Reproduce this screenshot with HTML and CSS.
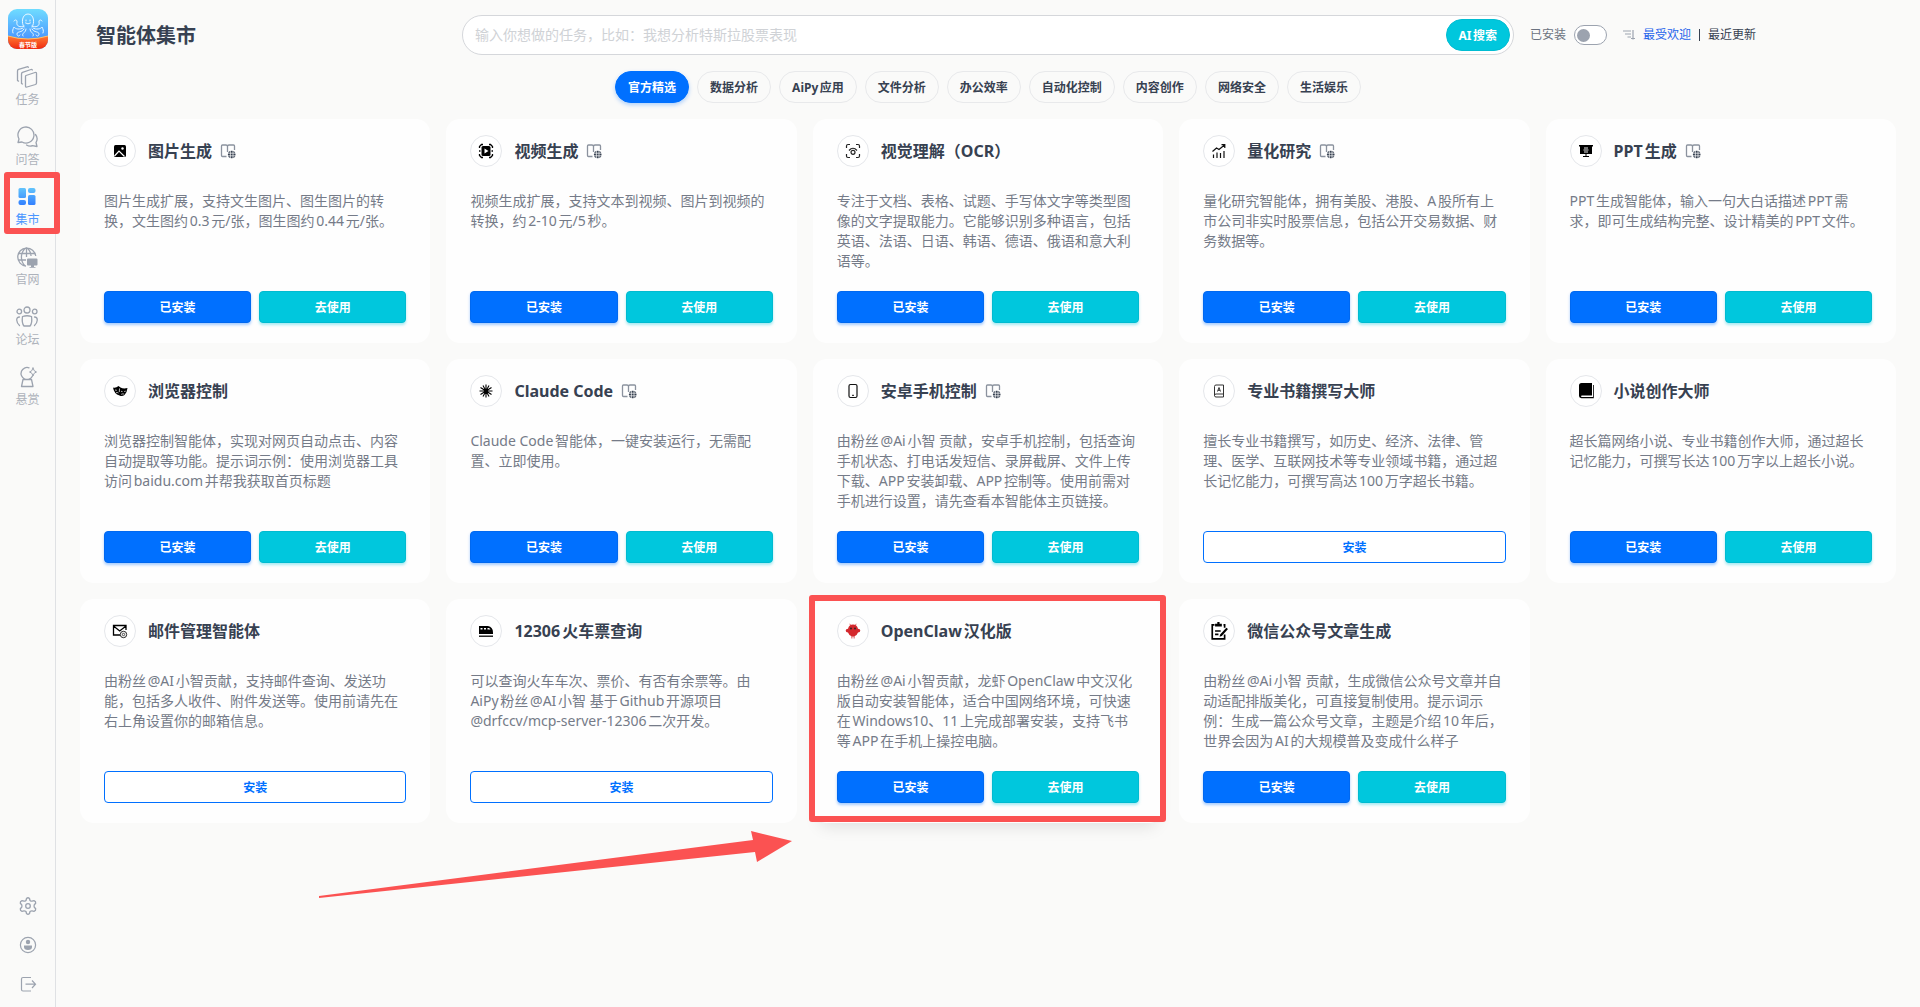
FILE: index.html
```html
<!DOCTYPE html>
<html lang="zh-CN">
<head>
<meta charset="utf-8">
<meta name="viewport" content="width=device-width, initial-scale=1">
<title>智能体集市</title>
<link rel="stylesheet" href="styles.css">
</head>
<body>
<svg class="sprite" aria-hidden="true">
  <symbol id="book" viewBox="0 0 16 16">
    <path d="M6.500 13.500H2.500Q1.500 13.500 1.500 12.500V3Q1.500 2 2.500 2H6Q7.500 2 7.500 3.500V9M7.500 3.500Q7.500 2 9 2H13.500Q14.500 2 14.500 3V7" fill="none" stroke="#8b929e" stroke-width="1.300"/>
    <circle cx="11.700" cy="11.500" r="3.800" fill="#374151"/>
    <path d="M7.500 10.200h8.500M7.500 12.800h8.500M10.400 7.500v8M13 7.500v8" stroke="#fff" stroke-width=".7"/>
  </symbol>
</svg>
<div class="app">
  <aside class="sidebar">
    <svg class="logo" viewBox="0 0 40 40" role="img" aria-label="AiPy">
      <defs>
        <linearGradient id="sky" x1="0" y1="0" x2="0" y2="1"><stop offset="0" stop-color="#6fdcff"/><stop offset=".75" stop-color="#4a97ff"/></linearGradient>
        <linearGradient id="fire" x1="0" y1="0" x2="0" y2="1"><stop offset="0" stop-color="#ff7a35"/><stop offset="1" stop-color="#f02a10"/></linearGradient>
        <clipPath id="round"><rect width="40" height="40" rx="9"/></clipPath>
      </defs>
      <g clip-path="url(#round)">
        <rect width="40" height="40" fill="url(#sky)"/>
        <g fill="none" stroke="#e9f8ff" stroke-width="1" stroke-linecap="round">
          <path d="M16 18C13 14 14 5 20 5s7 9 4 13"/>
          <path d="M16 17c-4 2-8 0-7-4 .5-2-2-3-3-1M24 17c4 2 8 0 7-4-.5-2 2-3 3-1"/>
          <path d="M15 19c-3 2-8 1-9-1-1 2-2 4-1 6M25 19c3 2 8 1 9-1 1 2 2 4 1 6"/>
          <path d="M16 20c-2 4-7 2-7 5 0 2 2 3 3 1M24 20c2 4 7 2 7 5 0 2-2 3-3 1"/>
          <path d="M18 20c0 4-5 4-3 7M22 20c0 4 5 4 3 7M17.500 14q2.500 2 5 0"/>
          <path d="M18 11v1M22 11v1"/>
        </g>
        <path d="M0 27Q20 33 40 27V40H0Z" fill="url(#fire)"/>
        <path d="M0 27Q20 33 40 27" fill="none" stroke="#ffc36b" stroke-width="1"/>
        <text x="20" y="38" text-anchor="middle" class="logo-text">春节版</text>
      </g>
    </svg>
    <nav class="side-nav">
      <a href="#" class="side-link">
        <svg viewBox="0 0 22 22"><g fill="none" stroke="currentColor" stroke-width="1.300" stroke-linejoin="round" stroke-linecap="round"><path d="M10 9.500 19 6.500Q20.500 6 20.500 7.500V17Q20.500 18 19.500 18.500L11 21Q9.500 21.500 9.500 20V10.500Q9.500 9.700 10 9.500Z"/><path d="M5.500 17.500V8Q5.500 6.700 6.500 6.300L15 3.500Q16 3.200 16.300 4M5.500 17.500l1 .5"/><path d="M1.500 14.500V5Q1.500 3.700 2.500 3.300L11 .8Q12 .5 12.300 1.300M1.500 14.500l1 .6"/></g></svg>
        <span>任务</span>
      </a>
      <a href="#" class="side-link">
        <svg viewBox="0 0 22 22"><g fill="none" stroke="currentColor" stroke-width="1.300" stroke-linejoin="round" stroke-linecap="round"><path d="M2 16.500 3 13A8 8 0 1 1 6 16Z"/><path d="M19.500 8.500A7 7 0 0 1 20 16.500L21 20.500 16.500 19.600Q13.500 20.800 10.500 19"/></g></svg>
        <span>问答</span>
      </a>
      <a href="#" class="side-link is-active" aria-current="page">
        <svg viewBox="0 0 22 22"><defs><linearGradient id="tile" gradientUnits="userSpaceOnUse" x1="0" y1="2" x2="0" y2="20"><stop offset="0" stop-color="#62c4fb"/><stop offset="1" stop-color="#2f7bff"/></linearGradient></defs><g fill="url(#tile)"><rect x="2.500" y="2" width="7.500" height="10" rx="1.500"/><rect x="12" y="2" width="7.500" height="5" rx="2"/><rect x="2.500" y="14" width="7.500" height="5" rx="2"/><rect x="12" y="9" width="7.500" height="10" rx="1.500"/></g></svg>
        <span>集市</span>
      </a>
      <a href="#" class="side-link">
        <svg viewBox="0 0 22 22"><g fill="none" stroke="currentColor" stroke-width="1.300"><path d="M10 20A9 9 0 1 1 19.700 10M10.500 1.500C4 6 4 15 9 20M10.500 1.500Q15 5 15 10M2 7.500H19M2 14H10M10.500 1.500V11"/></g><path d="M12 12.500h8.500q1 0 1 1v5q0 1-1 1H18v1.500h1.500v.8h-6v-.8H15v-1.500h-3q-1 0-1-1v-5q0-1 1-1Z" fill="currentColor"/></svg>
        <span>官网</span>
      </a>
      <a href="#" class="side-link">
        <svg viewBox="0 0 22 22"><g fill="none" stroke="currentColor" stroke-width="1.300" stroke-linecap="round"><circle cx="11" cy="4" r="3"/><circle cx="3.300" cy="5.500" r="2.300"/><circle cx="18.700" cy="5.500" r="2.300"/><path d="M6.500 10.500Q11 9 15.500 10.500Q16.500 17 14 20H8Q5.500 17 6.500 10.500ZM3.500 11Q.7 11 .7 14Q1 17.500 3.500 19.500M18.500 11Q21.300 11 21.300 14Q21 17.500 18.500 19.500"/></g></svg>
        <span>论坛</span>
      </a>
      <a href="#" class="side-link">
        <svg viewBox="0 0 22 22"><g fill="none" stroke="currentColor" stroke-width="1.300" stroke-linejoin="round" stroke-linecap="round"><path d="M13 1.800A6 6 0 1 0 16.500 10M7 13.500H15.500L17 20.500H5.500Z"/><path d="M17 2Q17.500 5.500 20.500 6 17.500 6.500 17 10 16.500 6.500 13.500 6 16.500 5.500 17 2Z" stroke-width="1"/></g></svg>
        <span>悬赏</span>
      </a>
    </nav>
    <div class="side-tools">
      <button type="button" aria-label="设置"><svg viewBox="0 0 20 20"><g fill="none" stroke="currentColor" stroke-width="1.300" stroke-linejoin="round"><circle cx="10" cy="10" r="2.300"/><path d="M8.500 2.500Q10 1 11.500 2.500L12 4.500Q13 5.300 14 5.200L16 4.700Q18 5.500 17.700 7.200L16.300 8.800Q15.800 10 16.300 11.200L17.700 12.800Q18 14.500 16 15.300L14 14.800Q13 14.700 12 15.500L11.500 17.500Q10 19 8.500 17.500L8 15.500Q7 14.700 6 14.800L4 15.300Q2 14.500 2.300 12.800L3.700 11.200Q4.200 10 3.700 8.800L2.300 7.200Q2 5.500 4 4.700L6 5.200Q7 5.300 8 4.500Z"/></g></svg></button>
      <button type="button" aria-label="账户"><svg viewBox="0 0 20 20"><circle cx="10" cy="10" r="7.600" fill="none" stroke="currentColor" stroke-width="1.200"/><circle cx="10" cy="7" r="2.200" fill="currentColor"/><path d="M6 10.500h8v1.500q0 3-4 3t-4-3Z" fill="currentColor"/></svg></button>
      <button type="button" aria-label="退出"><svg viewBox="0 0 20 20"><path d="M13 3.500H5Q3.500 3.500 3.500 5V15.500Q3.500 17 5 17H13M7.500 10.200H17.500M14 6.500 17.500 10.200 14 14" fill="none" stroke="currentColor" stroke-width="1.200"/></svg></button>
    </div>
    <div class="side-mark"></div>
  </aside>

  <main class="main">
    <header class="top">
      <h1>智能体集市</h1>
      <form class="search">
        <input type="text" aria-label="任务" placeholder="输入你想做的任务，比如：我想分析特斯拉股票表现">
        <button type="button">AI搜索</button>
      </form>
      <div class="filters">
        <label class="switch">已安装<input type="checkbox" role="switch"></label>
        <div class="sort">
          <svg viewBox="0 0 12 12" aria-hidden="true"><path d="M0 2h8M2 5h6M4.500 8H8M10 1v9.500M8 9.500h4" fill="none" stroke="#9ca3af" stroke-width="1.200"/></svg>
          <a href="#" class="is-active">最受欢迎</a>
          <i></i>
          <a href="#">最近更新</a>
        </div>
      </div>
    </header>

    <div class="tabs">
      <button type="button" class="is-active">官方精选</button>
      <button type="button">数据分析</button>
      <button type="button">AiPy应用</button>
      <button type="button">文件分析</button>
      <button type="button">办公效率</button>
      <button type="button">自动化控制</button>
      <button type="button">内容创作</button>
      <button type="button">网络安全</button>
      <button type="button">生活娱乐</button>
    </div>

    <section class="grid">
      <article class="card">
        <div class="card-head">
          <span class="badge"><svg viewBox="0 0 16 16"><rect x="2" y="2" width="12" height="12" rx="1.500"/><path d="M2.500 13 7 8l5.500 5.500" fill="none" stroke="#fff" stroke-width="1.200"/><circle cx="10.500" cy="5.500" r="1.200" fill="#fff"/></svg></span>
          <h2>图片生成</h2><svg class="book"><use href="#book"/></svg>
        </div>
        <p>图片生成扩展，支持文生图片、图生图片的转换，文生图约0.3元/张，图生图约0.44元/张。</p>
        <div class="actions"><button type="button" class="btn blue">已安装</button><button type="button" class="btn cyan">去使用</button></div>
      </article>
      <article class="card">
        <div class="card-head">
          <span class="badge"><svg viewBox="0 0 16 16"><path d="M1.500 5V3.500L3.500 1.500H5M11 1.500h1.500l2 2V5M14.500 11v1.500l-2 2H11M5 14.500H3.500l-2-2V11M1 8h1.500M13.500 8H15" fill="none" stroke="#000" stroke-width="1.300"/><rect x="3.500" y="3" width="9" height="10" rx="1.500"/><path d="M6.500 5.500v5L10.500 8Z" fill="#fff"/></svg></span>
          <h2>视频生成</h2><svg class="book"><use href="#book"/></svg>
        </div>
        <p>视频生成扩展，支持文本到视频、图片到视频的转换，约2-10元/5秒。</p>
        <div class="actions"><button type="button" class="btn blue">已安装</button><button type="button" class="btn cyan">去使用</button></div>
      </article>
      <article class="card">
        <div class="card-head">
          <span class="badge"><svg viewBox="0 0 16 16"><g fill="none" stroke="#222" stroke-width="1.200"><path d="M1.500 5V3Q1.500 1.500 3 1.500H5M11 1.500h2q1.500 0 1.500 1.500V5M14.500 11v2q0 1.500-1.500 1.500H11M5 14.500H3Q1.500 14.500 1.500 13V11M4 7.500Q8 3 12 7.500"/><circle cx="8" cy="9.300" r="2"/></g></svg></span>
          <h2>视觉理解（OCR）</h2>
        </div>
        <p>专注于文档、表格、试题、手写体文字等类型图像的文字提取能力。它能够识别多种语言，包括英语、法语、日语、韩语、德语、俄语和意大利语等。</p>
        <div class="actions"><button type="button" class="btn blue">已安装</button><button type="button" class="btn cyan">去使用</button></div>
      </article>
      <article class="card">
        <div class="card-head">
          <span class="badge"><svg viewBox="0 0 16 16"><path d="M1.500 8.500 5.500 5 8 6.500 13.500 2M10.500 1.700h3.300V5M2.500 15v-3.500M6 15V9.500M9.500 15v-5M13 15V8" fill="none" stroke="#111" stroke-width="1.200"/></svg></span>
          <h2>量化研究</h2><svg class="book"><use href="#book"/></svg>
        </div>
        <p>量化研究智能体，拥有美股、港股、A股所有上市公司非实时股票信息，包括公开交易数据、财务数据等。</p>
        <div class="actions"><button type="button" class="btn blue">已安装</button><button type="button" class="btn cyan">去使用</button></div>
      </article>
      <article class="card">
        <div class="card-head">
          <span class="badge"><svg viewBox="0 0 16 16"><path d="M1 2h14v1.500h-1V11H2V3.500H1ZM7.500 11h1v2H11v1H5v-1h2.500Z"/><path d="M6 5h4M5.500 7h5M6 9h4" stroke="#fff" stroke-width=".9"/></svg></span>
          <h2>PPT生成</h2><svg class="book"><use href="#book"/></svg>
        </div>
        <p>PPT生成智能体，输入一句大白话描述PPT需求，即可生成结构完整、设计精美的PPT文件。</p>
        <div class="actions"><button type="button" class="btn blue">已安装</button><button type="button" class="btn cyan">去使用</button></div>
      </article>

      <article class="card">
        <div class="card-head">
          <span class="badge"><svg viewBox="0 0 16 16"><path d="M1 4.500Q4 5.200 6.500 3L8.500 4.500Q11.500 6 15.500 5 15 9.500 12.500 12 10 13.800 7.500 12.500 2 11 1 4.500Z"/><path d="M3 7l1.800.3M4 9.800q1.300-.8 2.500.2M9 8.300l1.500.3M12.200 8.500l1.500-.3M9.200 11.300q1.500-.8 3-.2M7.500 5.500 7.300 9" stroke="#fff" stroke-width=".7" fill="none"/></svg></span>
          <h2>浏览器控制</h2>
        </div>
        <p>浏览器控制智能体，实现对网页自动点击、内容自动提取等功能。提示词示例：使用浏览器工具访问baidu.com并帮我获取首页标题</p>
        <div class="actions"><button type="button" class="btn blue">已安装</button><button type="button" class="btn cyan">去使用</button></div>
      </article>
      <article class="card">
        <div class="card-head">
          <span class="badge"><svg viewBox="0 0 16 16"><path d="M8 8V1.500M8 8l3-5.500M8 8l5.500-3.500M8 8h6.500M8 8l5.500 3.500M8 8l3 5.500M8 8v6.500M8 8l-3 5.500M8 8l-5.500 3.500M8 8H1.500M8 8 2.500 4.500M8 8 5 2.500" stroke="#000" stroke-width="1.100"/></svg></span>
          <h2>Claude Code</h2><svg class="book"><use href="#book"/></svg>
        </div>
        <p>Claude Code智能体，一键安装运行，无需配置、立即使用。</p>
        <div class="actions"><button type="button" class="btn blue">已安装</button><button type="button" class="btn cyan">去使用</button></div>
      </article>
      <article class="card">
        <div class="card-head">
          <span class="badge"><svg viewBox="0 0 16 16"><rect x="4" y="1.500" width="8" height="13" rx="1.500" fill="none" stroke="#111" stroke-width="1.200"/><path d="M7 12.300h2" stroke="#111"/></svg></span>
          <h2>安卓手机控制</h2><svg class="book"><use href="#book"/></svg>
        </div>
        <p>由粉丝@Ai小智 贡献，安卓手机控制，包括查询手机状态、打电话发短信、录屏截屏、文件上传下载、APP安装卸载、APP控制等。使用前需对手机进行设置，请先查看本智能体主页链接。</p>
        <div class="actions"><button type="button" class="btn blue">已安装</button><button type="button" class="btn cyan">去使用</button></div>
      </article>
      <article class="card">
        <div class="card-head">
          <span class="badge"><svg viewBox="0 0 16 16"><path d="M12.500 11V2H5Q3.500 2 3.500 3.500V12.500Q3.500 14 5 14H12.500M3.500 12.500Q3.500 11 5 11H12.500V14M6.500 8.500 8 4.500l1.500 4M7 7.300h2" fill="none" stroke="#333"/></svg></span>
          <h2>专业书籍撰写大师</h2>
        </div>
        <p>擅长专业书籍撰写，如历史、经济、法律、管理、医学、互联网技术等专业领域书籍，通过超长记忆能力，可撰写高达100万字超长书籍。</p>
        <div class="actions"><button type="button" class="btn line">安装</button></div>
      </article>
      <article class="card">
        <div class="card-head">
          <span class="badge"><svg viewBox="0 0 16 16"><path d="M3.500 0H14v12.500H4q-1 0-1 .7t1 .8H15V2h.8v13.200H3.500Q1 15 1 13V2.500Q1 0 3.500 0Z"/></svg></span>
          <h2>小说创作大师</h2>
        </div>
        <p>超长篇网络小说、专业书籍创作大师，通过超长记忆能力，可撰写长达100万字以上超长小说。</p>
        <div class="actions"><button type="button" class="btn blue">已安装</button><button type="button" class="btn cyan">去使用</button></div>
      </article>

      <article class="card">
        <div class="card-head">
          <span class="badge"><svg viewBox="0 0 16 16"><path d="M8 12H1.500V2.500H14V7M1.500 3 7.700 8 14 3" fill="none" stroke="#000" stroke-width="1.300"/><circle cx="11.500" cy="11.500" r="3.200" fill="#fff" stroke="#222"/><circle cx="11.500" cy="11.500" r="1.200" fill="none" stroke="#222" stroke-width=".8"/></svg></span>
          <h2>邮件管理智能体</h2>
        </div>
        <p>由粉丝@AI小智贡献，支持邮件查询、发送功能，包括多人收件、附件发送等。使用前请先在右上角设置你的邮箱信息。</p>
        <div class="actions"><button type="button" class="btn line">安装</button></div>
      </article>
      <article class="card">
        <div class="card-head">
          <span class="badge"><svg viewBox="0 0 16 16"><path d="M1 3h9q5 1 5 6.500V11H1Z"/><path d="M2.500 5h2v1.500h-2zM6 5h2v1.500H6zM9.500 5h1.500q1 .5 1.500 1.500h-3z" fill="#fff"/><path d="M1 13.200h14" stroke="#000" stroke-width="1.300"/></svg></span>
          <h2>12306火车票查询</h2>
        </div>
        <p>可以查询火车车次、票价、有否有余票等。由AiPy粉丝@AI小智 基于Github开源项目@drfccv/mcp-server-12306二次开发。</p>
        <div class="actions"><button type="button" class="btn line">安装</button></div>
      </article>
      <article class="card is-raised">
        <div class="card-head">
          <span class="badge"><svg viewBox="0 0 16 16"><path d="M6 3 4.800 .8M10 3 11.200 .8" stroke="#e0474a" stroke-width=".8"/><path d="M8 1.500q3.800 0 5 4.200 2.300 0 2.300 1.700T13 9.500Q12 12.300 9.500 13.300V15.500H8.700V13.500H7.300V15.500H6.500V13.300Q4 12.300 3 9.500 .7 9.100 .7 7.400T3 5.700Q4.200 1.500 8 1.500Z" fill="#d4282d"/><circle cx="6" cy="5.500" r=".9" fill="#222"/><circle cx="10" cy="5.500" r=".9" fill="#222"/></svg></span>
          <h2>OpenClaw汉化版</h2>
        </div>
        <p>由粉丝@Ai小智贡献，龙虾OpenClaw中文汉化版自动安装智能体，适合中国网络环境，可快速在Windows10、11上完成部署安装，支持飞书等APP在手机上操控电脑。</p>
        <div class="actions"><button type="button" class="btn blue">已安装</button><button type="button" class="btn cyan">去使用</button></div>
        <div class="card-mark"></div>
        <svg class="arrow" viewBox="0 0 480 80" aria-hidden="true"><path d="M2 70 436 14 434 5 475 15 440 36 438 26 2 72Z" fill="#fb5252"/></svg>
      </article>
      <article class="card">
        <div class="card-head">
          <span class="badge"><svg class="tall" viewBox="0 0 16 16"><path d="M12 2.500H13V5M4 2.500H2V15H13V11M4.500 8h5M4.500 11h3" fill="none" stroke="#000" stroke-width="1.500"/><path d="M4.500 1.500H6.500V0h2v1.500h2V4h-6ZM14.500 5 16 6.300 10.500 12.500 8.500 13 9 11Z"/></svg></span>
          <h2>微信公众号文章生成</h2>
        </div>
        <p>由粉丝@Ai小智 贡献，生成微信公众号文章并自动适配排版美化，可直接复制使用。提示词示例：生成一篇公众号文章，主题是介绍10年后，世界会因为AI的大规模普及变成什么样子</p>
        <div class="actions"><button type="button" class="btn blue">已安装</button><button type="button" class="btn cyan">去使用</button></div>
      </article>
    </section>
  </main>
</div>
</body>
</html>
```
FILE: styles.css
```css
* { box-sizing: border-box; }

body {
  margin: 0;
  background: #fafaf9;
  color: #374151;
  font-family: "Noto Sans", "Noto Sans CJK SC", sans-serif;
  font-size: 14px;
  line-height: 20px;
  text-autospace: normal;
}

button, input { font: inherit; color: inherit; text-autospace: inherit; }
button { cursor: pointer; }
a { color: inherit; text-decoration: none; }
h1, h2, p { margin: 0; }
.sprite { display: none; }

.app {
  display: grid;
  grid-template-columns: 56px 1fr;
  min-height: 100vh;
}

/* Sidebar */
.sidebar {
  position: relative;
  display: flex;
  flex-direction: column;
  align-items: center;
  padding: 9px 0 13px;
  border-right: 1px solid #dfe1e4;
  color: #9ca3af;
}
.logo { width: 40px; height: 40px; }
.logo-text { font-size: 6px; font-weight: 700; fill: #fff; }
.side-nav {
  display: flex;
  flex-direction: column;
  gap: 20px;
  margin-top: 17px;
}
.side-link {
  display: flex;
  flex-direction: column;
  align-items: center;
  height: 40px;
  gap: 4px;
  font-size: 12px;
  line-height: 16px;
}
.side-link span { color: #adb2bb; }
.side-link svg { width: 22px; height: 22px; flex: none; }
.side-link.is-active span { color: #4b96ff; }
.side-tools {
  display: flex;
  flex-direction: column;
  gap: 19px;
  margin-top: auto;
}
.side-tools button {
  display: block;
  padding: 0;
  border: 0;
  background: none;
}
.side-tools svg { display: block; width: 20px; height: 20px; }
.side-mark {
  position: absolute;
  top: 172px;
  left: 4px;
  width: 56px;
  height: 62px;
  border: 6px solid #fb5252;
  border-radius: 3px;
  pointer-events: none;
}

/* Header */
.main { min-width: 0; padding: 15px 24px 24px; }
.top {
  display: grid;
  grid-template-columns: 382px 1fr 382px;
  align-items: center;
}
h1 {
  padding: 2px 0 0 16px;
  font-size: 20px;
  line-height: 28px;
  font-weight: 700;
}
.search {
  display: flex;
  align-items: center;
  height: 40px;
  padding: 0 3px 0 12px;
  border: 1px solid #d5d7db;
  border-radius: 20px;
  background: #fff;
}
.search input {
  flex: 1;
  min-width: 0;
  padding: 0;
  border: 0;
  outline: 0;
  background: none;
}
.search input::placeholder { color: #cfd2d6; opacity: 1; }
.search button {
  height: 32px;
  padding: 1px 12px 0;
  border: 1px solid #00bdd2;
  border-radius: 16px;
  background: #00c7dd;
  color: #fff;
  font-size: 12px;
  font-weight: 700;
}
.filters {
  display: flex;
  align-items: center;
  gap: 16px;
  padding-left: 16px;
  font-size: 12px;
}
.switch {
  display: flex;
  align-items: center;
  gap: 8px;
  color: #6b7280;
}
.switch input {
  appearance: none;
  display: flex;
  align-items: center;
  width: 33px;
  height: 20px;
  margin: 0;
  padding: 2px;
  border: 1px solid #9ca3af;
  border-radius: 10px;
  background: #fff;
}
.switch input::before {
  content: "";
  width: 13px;
  height: 13px;
  border-radius: 50%;
  background: #9ca3af;
}
.switch input:checked { justify-content: flex-end; }
.sort { display: flex; align-items: center; gap: 8px; }
.sort svg { width: 12px; height: 12px; }
.sort i { width: 1px; height: 12px; background: #374151; }
.sort .is-active { color: #2563eb; }

/* Category tabs */
.tabs {
  display: flex;
  justify-content: center;
  flex-wrap: wrap;
  gap: 8px;
  margin: 16px 0;
}
.tabs button {
  height: 32px;
  padding: 2px 12px 0;
  border: 1px solid #e8e9eb;
  border-radius: 16px;
  background: #fafaf9;
  font-size: 12px;
  font-weight: 700;
}
.tabs .is-active {
  border-color: #0070ff;
  background: #0070ff;
  color: #fff;
  box-shadow: 0 2px 4px #0070ff4d;
}

/* Cards */
.grid {
  display: grid;
  grid-template-columns: repeat(5, minmax(0, 1fr));
  gap: 16px;
}
.card {
  position: relative;
  display: flex;
  flex-direction: column;
  min-height: 224px;
  padding: 16px 24px 20px;
  border-radius: 14px;
  background: #fefefe;
}
.card.is-raised { box-shadow: 0 10px 16px -6px #0000001a; }
.card-head { display: flex; align-items: center; }
.badge {
  display: grid;
  place-items: center;
  width: 32px;
  height: 32px;
  margin-right: 12px;
  border: 1px solid #e5e7eb;
  border-radius: 50%;
  background: #fff;
}
.badge svg { width: 16px; height: 16px; }
h2 { font-size: 16px; line-height: 24px; font-weight: 700; }
.book { width: 16px; height: 16px; margin-left: 8px; }
.card p { margin: 24px 0 20px; color: #757b88; }
.actions { display: flex; gap: 8px; margin-top: auto; }
.btn {
  flex: 1;
  height: 32px;
  padding: 2px 0 0;
  border: 1px solid;
  border-radius: 4px;
  font-size: 12px;
  font-weight: 700;
}
.btn.blue {
  border-color: #0068f0;
  background: #0070ff;
  color: #fff;
  box-shadow: 0 2px 3px #0070ff59;
}
.btn.cyan {
  border-color: #00bbd0;
  background: #00c7dd;
  color: #fff;
  box-shadow: 0 2px 3px #00c7dd59;
}
.btn.line { border-color: #0070ff; background: #fff; color: #0070ff; }

/* Annotations over the highlighted card */
.card-mark {
  position: absolute;
  inset: -4px -3px 1px -4px;
  border: 6px solid #fb5252;
  border-radius: 3px;
  pointer-events: none;
}
.arrow {
  position: absolute;
  top: 227px;
  right: 366px;
  width: 480px;
  height: 80px;
  pointer-events: none;
}
.badge .tall { width: 18px; height: 18px; }
```
